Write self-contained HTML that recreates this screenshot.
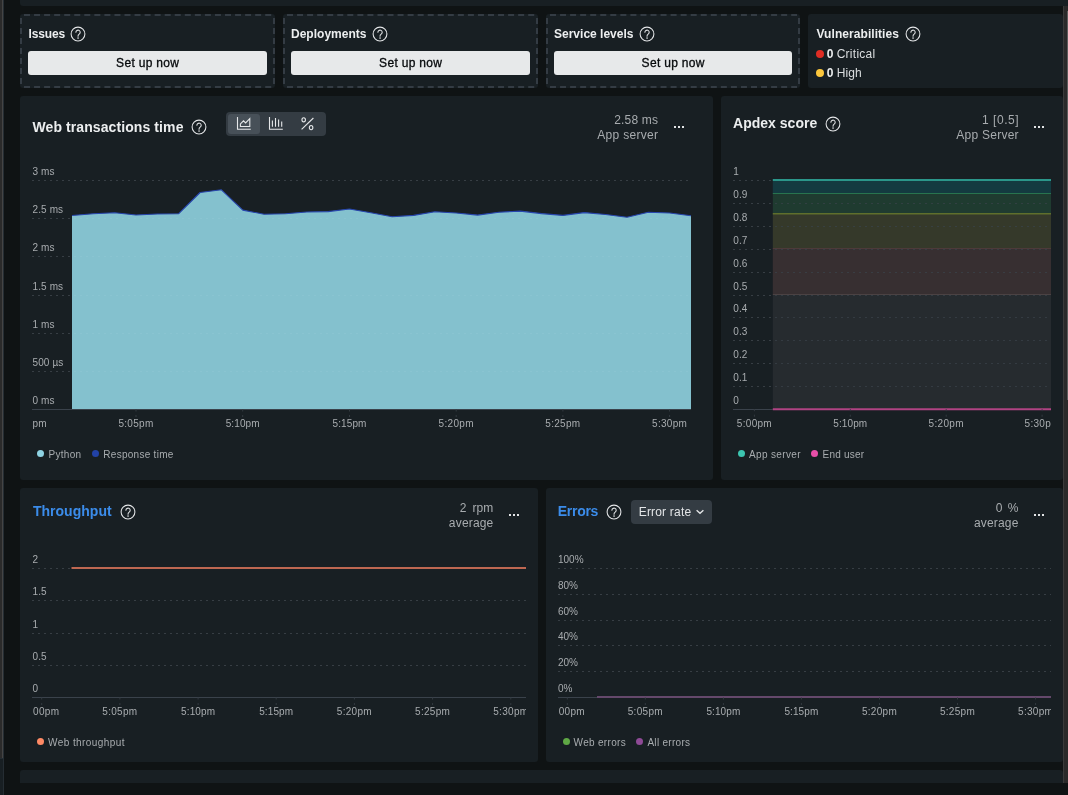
<!DOCTYPE html>
<html><head><meta charset="utf-8"><title>Summary</title>
<style>
html,body{margin:0;padding:0}
body{width:1068px;height:795px;overflow:hidden;position:relative;background:#0f1314;font-family:"Liberation Sans",sans-serif}
.a,.t,.p,.d,.b{position:absolute}
.t{white-space:nowrap}
.p{background:#181f23;border-radius:3px}
.d{width:2px;height:2px;background:#e2e4e6}
.b{background:#e7e9ea;border-radius:3px;height:24px;width:239px;top:51px}
svg{display:block;overflow:visible}
</style></head><body><div id="root" style="position:absolute;left:0;top:0;width:1068px;height:795px;will-change:transform">

<div class="a" style="left:20px;top:0;width:1048px;height:5.7px;background:#181f23;border-bottom-left-radius:3px"></div>
<div class="a" style="left:0;top:0;width:2px;height:758px;background:#2b2b2b"></div>
<div class="a" style="left:2px;top:0;width:1px;height:758px;background:#454545"></div>
<div class="a" style="left:0;top:758px;width:3px;height:37px;background:#181f23;border-top:1px solid #252d33;box-sizing:border-box"></div>
<div class="a" style="left:3px;top:0;width:1px;height:795px;background:#252d33"></div>
<div class="a" style="left:1063px;top:6px;width:1px;height:777px;background:#3a3a3a"></div>
<div class="a" style="left:1064px;top:6px;width:4px;height:777px;background:#2a2a2a"></div>
<div class="a" style="left:1067px;top:10.5px;width:1px;height:389.5px;background:#5c5c5c"></div>
<div class="p" style="left:20px;top:14px;width:255px;height:74px;"></div>
<svg class="a" style="left:20px;top:14px" width="255" height="74" fill="none" stroke="#343c44" stroke-width="2"><path d="M4 1H252M4 73H252" stroke-dasharray="6 4.05"/><path d="M1 4V70M254 4V70" stroke-dasharray="6 4"/></svg>
<div class="t" style="top:28px;font-size:12px;line-height:12px;color:#eceeef;font-weight:bold;letter-spacing:-0.143px;left:28.50px;">Issues</div>
<svg class="a" style="left:70.30px;top:25.60px" width="16" height="16" viewBox="0 0 16 16" fill="none" stroke="#e4e6e8" stroke-width="1.05"><circle cx="8" cy="8" r="6.9"/><path d="M5.9 6.3a2.15 2.15 0 1 1 3.3 1.8c-.75.5-1.15.95-1.15 1.8v.35" stroke-linecap="round"/><circle cx="8.05" cy="12.1" r=".8" fill="#e4e6e8" stroke="none"/></svg>
<div class="b" style="left:28px;width:239px"></div>
<div class="t" style="top:57px;font-size:12px;line-height:12px;color:#06090b;letter-spacing:0.3px;left:47.65px;width:200px;text-align:center;-webkit-text-stroke:.3px #06090b;">Set up now</div>
<div class="p" style="left:283px;top:14px;width:255px;height:74px;"></div>
<svg class="a" style="left:283px;top:14px" width="255" height="74" fill="none" stroke="#343c44" stroke-width="2"><path d="M4 1H252M4 73H252" stroke-dasharray="6 4.05"/><path d="M1 4V70M254 4V70" stroke-dasharray="6 4"/></svg>
<div class="t" style="top:28px;font-size:12px;line-height:12px;color:#eceeef;font-weight:bold;letter-spacing:0.013px;left:291.00px;">Deployments</div>
<svg class="a" style="left:371.80px;top:25.60px" width="16" height="16" viewBox="0 0 16 16" fill="none" stroke="#e4e6e8" stroke-width="1.05"><circle cx="8" cy="8" r="6.9"/><path d="M5.9 6.3a2.15 2.15 0 1 1 3.3 1.8c-.75.5-1.15.95-1.15 1.8v.35" stroke-linecap="round"/><circle cx="8.05" cy="12.1" r=".8" fill="#e4e6e8" stroke="none"/></svg>
<div class="b" style="left:291px;width:239px"></div>
<div class="t" style="top:57px;font-size:12px;line-height:12px;color:#06090b;letter-spacing:0.3px;left:310.65px;width:200px;text-align:center;-webkit-text-stroke:.3px #06090b;">Set up now</div>
<div class="p" style="left:546px;top:14px;width:254px;height:74px;"></div>
<svg class="a" style="left:546px;top:14px" width="254" height="74" fill="none" stroke="#343c44" stroke-width="2"><path d="M4 1H251M4 73H251" stroke-dasharray="6 4.05"/><path d="M1 4V70M253 4V70" stroke-dasharray="6 4"/></svg>
<div class="t" style="top:28px;font-size:12px;line-height:12px;color:#eceeef;font-weight:bold;letter-spacing:0.006px;left:554.00px;">Service levels</div>
<svg class="a" style="left:638.80px;top:25.60px" width="16" height="16" viewBox="0 0 16 16" fill="none" stroke="#e4e6e8" stroke-width="1.05"><circle cx="8" cy="8" r="6.9"/><path d="M5.9 6.3a2.15 2.15 0 1 1 3.3 1.8c-.75.5-1.15.95-1.15 1.8v.35" stroke-linecap="round"/><circle cx="8.05" cy="12.1" r=".8" fill="#e4e6e8" stroke="none"/></svg>
<div class="b" style="left:554px;width:238px"></div>
<div class="t" style="top:57px;font-size:12px;line-height:12px;color:#06090b;letter-spacing:0.3px;left:573.15px;width:200px;text-align:center;-webkit-text-stroke:.3px #06090b;">Set up now</div>
<div class="p" style="left:808px;top:14px;width:255px;height:74px;"></div>
<div class="t" style="top:28px;font-size:12px;line-height:12px;color:#eceeef;font-weight:bold;letter-spacing:0.06px;left:816.50px;">Vulnerabilities</div>
<svg class="a" style="left:905.00px;top:25.60px" width="16" height="16" viewBox="0 0 16 16" fill="none" stroke="#e4e6e8" stroke-width="1.05"><circle cx="8" cy="8" r="6.9"/><path d="M5.9 6.3a2.15 2.15 0 1 1 3.3 1.8c-.75.5-1.15.95-1.15 1.8v.35" stroke-linecap="round"/><circle cx="8.05" cy="12.1" r=".8" fill="#e4e6e8" stroke="none"/></svg>
<i class="a" style="left:816px;top:49.8px;width:8px;height:8px;border-radius:50%;background:#df2d24"></i>
<i class="a" style="left:816px;top:69px;width:8px;height:8px;border-radius:50%;background:#fcc73c"></i>
<div class="t" style="top:48px;font-size:12px;line-height:12px;color:#eceeef;font-weight:bold;left:826.70px;">0</div>
<div class="t" style="top:48px;font-size:12px;line-height:12px;color:#dcdfe1;letter-spacing:0.26px;left:836.70px;">Critical</div>
<div class="t" style="top:67px;font-size:12px;line-height:12px;color:#eceeef;font-weight:bold;left:826.70px;">0</div>
<div class="t" style="top:67px;font-size:12px;line-height:12px;color:#dcdfe1;letter-spacing:0.12px;left:836.70px;">High</div>
<div class="p" style="left:20px;top:96px;width:693px;height:384px;"></div>
<div class="p" style="left:721px;top:96px;width:342px;height:384px;"></div>
<div class="t" style="top:120px;font-size:14px;line-height:14px;color:#eceeef;font-weight:bold;letter-spacing:0.09px;left:32.50px;">Web transactions time</div>
<svg class="a" style="left:191.40px;top:119.40px" width="16" height="16" viewBox="0 0 16 16" fill="none" stroke="#e4e6e8" stroke-width="1.05"><circle cx="8" cy="8" r="6.9"/><path d="M5.9 6.3a2.15 2.15 0 1 1 3.3 1.8c-.75.5-1.15.95-1.15 1.8v.35" stroke-linecap="round"/><circle cx="8.05" cy="12.1" r=".8" fill="#e4e6e8" stroke="none"/></svg>
<div class="a" style="left:226px;top:112px;width:100px;height:24px;border-radius:4px;background:#343c43"></div>
<div class="a" style="left:228px;top:114px;width:32px;height:20px;border-radius:3px;background:#475058"></div>
<svg class="a" style="left:226px;top:112px" width="100" height="24" viewBox="226 112 100 24" fill="none" stroke="#e6e8ea" stroke-width="1.1">
<path d="M237.5 117v12.3h13.3"/><path d="M240.4 126.5v-2.6l3.1-3.1 2.1 2.1 4.2-4.2v7.8z" stroke-linejoin="miter"/>
<path d="M269.5 117v12.3h13.3"/><path d="M272.4 120.5v6.2M275.5 118v8.7M278.6 119.5v7.2M281.7 121.5v5.2"/>
<path d="M301.6 129.3L313.4 118"/><ellipse cx="303.7" cy="119.8" rx="1.75" ry="2.1"/><ellipse cx="311.1" cy="127.6" rx="1.75" ry="2.1"/>
</svg>
<div class="t" style="top:114px;font-size:12px;line-height:12px;color:#a8acaf;letter-spacing:0.19px;right:409.81px;">2.58 ms</div>
<div class="t" style="top:129px;font-size:12px;line-height:12px;color:#a8acaf;letter-spacing:0.3px;right:409.70px;">App server</div>
<i class="d" style="left:674px;top:126px"></i><i class="d" style="left:678px;top:126px"></i><i class="d" style="left:682px;top:126px"></i>
<svg class="a" style="left:0;top:0" width="1068" height="795" viewBox="0 0 1068 795"><path d="M32 180.5H689" stroke="#373e44" stroke-width="1" stroke-dasharray="2 4"/><path d="M32 218.5H689" stroke="#373e44" stroke-width="1" stroke-dasharray="2 4"/><path d="M32 256.5H689" stroke="#373e44" stroke-width="1" stroke-dasharray="2 4"/><path d="M32 295.5H689" stroke="#373e44" stroke-width="1" stroke-dasharray="2 4"/><path d="M32 333.5H689" stroke="#373e44" stroke-width="1" stroke-dasharray="2 4"/><path d="M32 371.5H689" stroke="#373e44" stroke-width="1" stroke-dasharray="2 4"/><polygon points="72.0,215.5 93.3,213.7 114.7,212.8 136.0,215.0 157.4,214.0 178.7,213.7 200.1,192.5 221.4,189.8 242.8,210.1 264.1,214.3 285.4,213.7 306.8,212.0 328.1,211.6 349.5,209.0 370.8,212.8 392.2,216.7 413.5,215.4 434.9,211.7 456.2,213.0 477.6,215.1 498.9,212.3 520.2,211.1 541.6,213.6 562.9,215.4 584.3,212.6 605.6,214.5 627.0,217.3 648.3,212.3 669.7,213.0 691.0,215.7 691,409 72,409" fill="#84c1ce"/><path d="M74 218.5H689" stroke="#8fc8d4" stroke-width="1" stroke-dasharray="2 4" opacity=".55"/><path d="M74 256.5H689" stroke="#8fc8d4" stroke-width="1" stroke-dasharray="2 4" opacity=".55"/><path d="M74 295.5H689" stroke="#8fc8d4" stroke-width="1" stroke-dasharray="2 4" opacity=".55"/><path d="M74 333.5H689" stroke="#8fc8d4" stroke-width="1" stroke-dasharray="2 4" opacity=".55"/><path d="M74 371.5H689" stroke="#8fc8d4" stroke-width="1" stroke-dasharray="2 4" opacity=".55"/><polyline points="72.0,215.5 93.3,213.7 114.7,212.8 136.0,215.0 157.4,214.0 178.7,213.7 200.1,192.5 221.4,189.8 242.8,210.1 264.1,214.3 285.4,213.7 306.8,212.0 328.1,211.6 349.5,209.0 370.8,212.8 392.2,216.7 413.5,215.4 434.9,211.7 456.2,213.0 477.6,215.1 498.9,212.3 520.2,211.1 541.6,213.6 562.9,215.4 584.3,212.6 605.6,214.5 627.0,217.3 648.3,212.3 669.7,213.0 691.0,215.7" fill="none" stroke="#2745ad" stroke-width="1.1" stroke-linejoin="round"/><path d="M32 409.5H691" stroke="#3a424b" stroke-width="1"/><path d="M136.0 409.5V417.5" stroke="#333a40" stroke-width="1" stroke-dasharray="2 3.5"/><path d="M242.7 409.5V417.5" stroke="#333a40" stroke-width="1" stroke-dasharray="2 3.5"/><path d="M349.5 409.5V417.5" stroke="#333a40" stroke-width="1" stroke-dasharray="2 3.5"/><path d="M456.2 409.5V417.5" stroke="#333a40" stroke-width="1" stroke-dasharray="2 3.5"/><path d="M562.9 409.5V417.5" stroke="#333a40" stroke-width="1" stroke-dasharray="2 3.5"/><path d="M669.6 409.5V417.5" stroke="#333a40" stroke-width="1" stroke-dasharray="2 3.5"/></svg>
<div class="t" style="top:167px;font-size:10px;line-height:10px;color:#a8acaf;letter-spacing:0.12px;left:32.50px;">3 ms</div>
<div class="t" style="top:205px;font-size:10px;line-height:10px;color:#a8acaf;letter-spacing:0.12px;left:32.50px;">2.5 ms</div>
<div class="t" style="top:243px;font-size:10px;line-height:10px;color:#a8acaf;letter-spacing:0.12px;left:32.50px;">2 ms</div>
<div class="t" style="top:282px;font-size:10px;line-height:10px;color:#a8acaf;letter-spacing:0.12px;left:32.50px;">1.5 ms</div>
<div class="t" style="top:320px;font-size:10px;line-height:10px;color:#a8acaf;letter-spacing:0.12px;left:32.50px;">1 ms</div>
<div class="t" style="top:358px;font-size:10px;line-height:10px;color:#a8acaf;letter-spacing:0.12px;left:32.50px;">500 µs</div>
<div class="t" style="top:396px;font-size:10px;line-height:10px;color:#a8acaf;letter-spacing:0.12px;left:32.50px;">0 ms</div>
<div class="a" style="left:32px;top:415px;width:660px;height:16px;overflow:hidden">
<div class="t" style="left:-52.7px;width:100px;text-align:center;top:4px;font-size:10px;line-height:10px;color:#a8acaf;letter-spacing:.3px">5:00pm</div>
<div class="t" style="left:54.0px;width:100px;text-align:center;top:4px;font-size:10px;line-height:10px;color:#a8acaf;letter-spacing:.3px">5:05pm</div>
<div class="t" style="left:160.7px;width:100px;text-align:center;top:4px;font-size:10px;line-height:10px;color:#a8acaf;letter-spacing:.1px">5:10pm</div>
<div class="t" style="left:267.5px;width:100px;text-align:center;top:4px;font-size:10px;line-height:10px;color:#a8acaf;letter-spacing:.1px">5:15pm</div>
<div class="t" style="left:374.2px;width:100px;text-align:center;top:4px;font-size:10px;line-height:10px;color:#a8acaf;letter-spacing:.3px">5:20pm</div>
<div class="t" style="left:480.9px;width:100px;text-align:center;top:4px;font-size:10px;line-height:10px;color:#a8acaf;letter-spacing:.3px">5:25pm</div>
<div class="t" style="left:587.6px;width:100px;text-align:center;top:4px;font-size:10px;line-height:10px;color:#a8acaf;letter-spacing:.3px">5:30pm</div>
</div>
<i class="a" style="left:36.7px;top:450.1px;width:7px;height:7px;border-radius:50%;background:#8fd3e3"></i>
<div class="t" style="top:450px;font-size:10px;line-height:10px;color:#a8acaf;letter-spacing:0.3px;left:48.50px;">Python</div>
<i class="a" style="left:91.8px;top:450.1px;width:7px;height:7px;border-radius:50%;background:#2242a6"></i>
<div class="t" style="top:450px;font-size:10px;line-height:10px;color:#a8acaf;letter-spacing:0.28px;left:103.30px;">Response time</div>
<div class="t" style="top:116px;font-size:14px;line-height:14px;color:#eceeef;font-weight:bold;letter-spacing:0.02px;left:733.00px;">Apdex score</div>
<svg class="a" style="left:825.40px;top:115.70px" width="16" height="16" viewBox="0 0 16 16" fill="none" stroke="#e4e6e8" stroke-width="1.05"><circle cx="8" cy="8" r="6.9"/><path d="M5.9 6.3a2.15 2.15 0 1 1 3.3 1.8c-.75.5-1.15.95-1.15 1.8v.35" stroke-linecap="round"/><circle cx="8.05" cy="12.1" r=".8" fill="#e4e6e8" stroke="none"/></svg>
<div class="t" style="top:114px;font-size:12px;line-height:12px;color:#a8acaf;letter-spacing:0.55px;right:48.85px;">1 [0.5]</div>
<div class="t" style="top:129px;font-size:12px;line-height:12px;color:#a8acaf;letter-spacing:0.26px;right:49.14px;">App Server</div>
<i class="d" style="left:1034px;top:126px"></i><i class="d" style="left:1038px;top:126px"></i><i class="d" style="left:1042px;top:126px"></i>
<svg class="a" style="left:0;top:0" width="1068" height="795" viewBox="0 0 1068 795"><rect x="772.8" y="181" width="278.2" height="12" fill="#143a40"/><rect x="772.8" y="193" width="278.2" height="20" fill="#1f3b30"/><rect x="772.8" y="213" width="278.2" height="35" fill="#35392a"/><rect x="772.8" y="248" width="278.2" height="46" fill="#372f31"/><rect x="772.8" y="294" width="278.2" height="115" fill="#262b2f"/><path d="M733 180.5H771" stroke="#373e44" stroke-width="1" stroke-dasharray="2 4"/><path d="M775 180.5H1051" stroke="#3a434b" stroke-width="1" stroke-dasharray="2 4" opacity=".7"/><path d="M733 203.5H771" stroke="#373e44" stroke-width="1" stroke-dasharray="2 4"/><path d="M775 203.5H1051" stroke="#3a434b" stroke-width="1" stroke-dasharray="2 4" opacity=".7"/><path d="M733 226.5H771" stroke="#373e44" stroke-width="1" stroke-dasharray="2 4"/><path d="M775 226.5H1051" stroke="#3a434b" stroke-width="1" stroke-dasharray="2 4" opacity=".7"/><path d="M733 249.5H771" stroke="#373e44" stroke-width="1" stroke-dasharray="2 4"/><path d="M775 249.5H1051" stroke="#3a434b" stroke-width="1" stroke-dasharray="2 4" opacity=".7"/><path d="M733 272.5H771" stroke="#373e44" stroke-width="1" stroke-dasharray="2 4"/><path d="M775 272.5H1051" stroke="#3a434b" stroke-width="1" stroke-dasharray="2 4" opacity=".7"/><path d="M733 295.5H771" stroke="#373e44" stroke-width="1" stroke-dasharray="2 4"/><path d="M775 295.5H1051" stroke="#3a434b" stroke-width="1" stroke-dasharray="2 4" opacity=".7"/><path d="M733 317.5H771" stroke="#373e44" stroke-width="1" stroke-dasharray="2 4"/><path d="M775 317.5H1051" stroke="#3a434b" stroke-width="1" stroke-dasharray="2 4" opacity=".7"/><path d="M733 340.5H771" stroke="#373e44" stroke-width="1" stroke-dasharray="2 4"/><path d="M775 340.5H1051" stroke="#3a434b" stroke-width="1" stroke-dasharray="2 4" opacity=".7"/><path d="M733 363.5H771" stroke="#373e44" stroke-width="1" stroke-dasharray="2 4"/><path d="M775 363.5H1051" stroke="#3a434b" stroke-width="1" stroke-dasharray="2 4" opacity=".7"/><path d="M733 386.5H771" stroke="#373e44" stroke-width="1" stroke-dasharray="2 4"/><path d="M775 386.5H1051" stroke="#3a434b" stroke-width="1" stroke-dasharray="2 4" opacity=".7"/><path d="M772.8 193.5H1051" stroke="#28744f" stroke-width="1"/><path d="M772.8 213.7H1051" stroke="#5f6f2c" stroke-width="1.5"/><path d="M772.8 248.5H1051" stroke="#4d3a3a" stroke-width="1"/><path d="M772.8 294.5H1051" stroke="#4b4243" stroke-width="1"/><path d="M772.8 180H1051" stroke="#2b968a" stroke-width="2"/><path d="M733 409.5H772.8" stroke="#3a424b" stroke-width="1"/><path d="M772.8 409.2H1051" stroke="#b04383" stroke-width="2"/><path d="M754.4 409.2V417.2" stroke="#333a40" stroke-width="1" stroke-dasharray="2 3.5"/><path d="M850.3 409.2V417.2" stroke="#333a40" stroke-width="1" stroke-dasharray="2 3.5"/><path d="M946.2 409.2V417.2" stroke="#333a40" stroke-width="1" stroke-dasharray="2 3.5"/><path d="M1042.1 409.2V417.2" stroke="#333a40" stroke-width="1" stroke-dasharray="2 3.5"/></svg>
<div class="t" style="top:167px;font-size:10px;line-height:10px;color:#a8acaf;letter-spacing:0.1px;left:733.30px;">1</div>
<div class="t" style="top:190px;font-size:10px;line-height:10px;color:#a8acaf;letter-spacing:0.1px;left:733.30px;">0.9</div>
<div class="t" style="top:213px;font-size:10px;line-height:10px;color:#a8acaf;letter-spacing:0.1px;left:733.30px;">0.8</div>
<div class="t" style="top:236px;font-size:10px;line-height:10px;color:#a8acaf;letter-spacing:0.1px;left:733.30px;">0.7</div>
<div class="t" style="top:259px;font-size:10px;line-height:10px;color:#a8acaf;letter-spacing:0.1px;left:733.30px;">0.6</div>
<div class="t" style="top:282px;font-size:10px;line-height:10px;color:#a8acaf;letter-spacing:0.1px;left:733.30px;">0.5</div>
<div class="t" style="top:304px;font-size:10px;line-height:10px;color:#a8acaf;letter-spacing:0.1px;left:733.30px;">0.4</div>
<div class="t" style="top:327px;font-size:10px;line-height:10px;color:#a8acaf;letter-spacing:0.1px;left:733.30px;">0.3</div>
<div class="t" style="top:350px;font-size:10px;line-height:10px;color:#a8acaf;letter-spacing:0.1px;left:733.30px;">0.2</div>
<div class="t" style="top:373px;font-size:10px;line-height:10px;color:#a8acaf;letter-spacing:0.1px;left:733.30px;">0.1</div>
<div class="t" style="top:396px;font-size:10px;line-height:10px;color:#a8acaf;letter-spacing:0.1px;left:733.30px;">0</div>
<div class="a" style="left:733px;top:415px;width:318px;height:16px;overflow:hidden">
<div class="t" style="left:-28.6px;width:100px;text-align:center;top:4px;font-size:10px;line-height:10px;color:#a8acaf;letter-spacing:.3px">5:00pm</div>
<div class="t" style="left:67.3px;width:100px;text-align:center;top:4px;font-size:10px;line-height:10px;color:#a8acaf;letter-spacing:.1px">5:10pm</div>
<div class="t" style="left:163.2px;width:100px;text-align:center;top:4px;font-size:10px;line-height:10px;color:#a8acaf;letter-spacing:.3px">5:20pm</div>
<div class="t" style="left:259.1px;width:100px;text-align:center;top:4px;font-size:10px;line-height:10px;color:#a8acaf;letter-spacing:.3px">5:30pm</div>
</div>
<i class="a" style="left:737.9px;top:450px;width:7px;height:7px;border-radius:50%;background:#3cc5b0"></i>
<div class="t" style="top:450px;font-size:10px;line-height:10px;color:#a8acaf;letter-spacing:0.36px;left:749.00px;">App server</div>
<i class="a" style="left:811.1px;top:450px;width:7px;height:7px;border-radius:50%;background:#e74fa8"></i>
<div class="t" style="top:450px;font-size:10px;line-height:10px;color:#a8acaf;letter-spacing:0.2px;left:822.60px;">End user</div>
<div class="p" style="left:20px;top:488px;width:517.5px;height:273.5px;"></div>
<div class="p" style="left:545.5px;top:488px;width:517.5px;height:273.5px;"></div>
<div class="t" style="top:504px;font-size:14px;line-height:14px;color:#3b8cea;font-weight:bold;letter-spacing:0.03px;left:32.90px;">Throughput</div>
<svg class="a" style="left:119.50px;top:503.70px" width="16" height="16" viewBox="0 0 16 16" fill="none" stroke="#e4e6e8" stroke-width="1.05"><circle cx="8" cy="8" r="6.9"/><path d="M5.9 6.3a2.15 2.15 0 1 1 3.3 1.8c-.75.5-1.15.95-1.15 1.8v.35" stroke-linecap="round"/><circle cx="8.05" cy="12.1" r=".8" fill="#e4e6e8" stroke="none"/></svg>
<div class="t" style="top:502px;font-size:12px;line-height:12px;color:#a8acaf;letter-spacing:0.1px;word-spacing:2.6px;right:574.60px;">2 rpm</div>
<div class="t" style="top:517px;font-size:12px;line-height:12px;color:#a8acaf;letter-spacing:0.18px;right:574.52px;">average</div>
<i class="d" style="left:509px;top:514px"></i><i class="d" style="left:513px;top:514px"></i><i class="d" style="left:517px;top:514px"></i>
<svg class="a" style="left:0;top:0" width="1068" height="795" viewBox="0 0 1068 795"><path d="M32 568.5H526" stroke="#373e44" stroke-width="1" stroke-dasharray="2 4"/><path d="M32 600.5H526" stroke="#373e44" stroke-width="1" stroke-dasharray="2 4"/><path d="M32 633.5H526" stroke="#373e44" stroke-width="1" stroke-dasharray="2 4"/><path d="M32 665.5H526" stroke="#373e44" stroke-width="1" stroke-dasharray="2 4"/><path d="M32 697.5H526" stroke="#3a424b" stroke-width="1"/><path d="M71.5 568H526" stroke="#be6751" stroke-width="2"/><path d="M41.7 697.5V705.5" stroke="#333a40" stroke-width="1" stroke-dasharray="2 3.5"/><path d="M119.9 697.5V705.5" stroke="#333a40" stroke-width="1" stroke-dasharray="2 3.5"/><path d="M198.1 697.5V705.5" stroke="#333a40" stroke-width="1" stroke-dasharray="2 3.5"/><path d="M276.2 697.5V705.5" stroke="#333a40" stroke-width="1" stroke-dasharray="2 3.5"/><path d="M354.4 697.5V705.5" stroke="#333a40" stroke-width="1" stroke-dasharray="2 3.5"/><path d="M432.6 697.5V705.5" stroke="#333a40" stroke-width="1" stroke-dasharray="2 3.5"/><path d="M510.8 697.5V705.5" stroke="#333a40" stroke-width="1" stroke-dasharray="2 3.5"/><path d="M558 568.5H1051" stroke="#373e44" stroke-width="1" stroke-dasharray="2 4"/><path d="M558 594.5H1051" stroke="#373e44" stroke-width="1" stroke-dasharray="2 4"/><path d="M558 620.5H1051" stroke="#373e44" stroke-width="1" stroke-dasharray="2 4"/><path d="M558 645.5H1051" stroke="#373e44" stroke-width="1" stroke-dasharray="2 4"/><path d="M558 671.5H1051" stroke="#373e44" stroke-width="1" stroke-dasharray="2 4"/><path d="M558 697.5H1051" stroke="#3a424b" stroke-width="1"/><path d="M597 697H1051" stroke="#64486b" stroke-width="2"/><path d="M567.3 697.5V705.5" stroke="#333a40" stroke-width="1" stroke-dasharray="2 3.5"/><path d="M645.3 697.5V705.5" stroke="#333a40" stroke-width="1" stroke-dasharray="2 3.5"/><path d="M723.4 697.5V705.5" stroke="#333a40" stroke-width="1" stroke-dasharray="2 3.5"/><path d="M801.4 697.5V705.5" stroke="#333a40" stroke-width="1" stroke-dasharray="2 3.5"/><path d="M879.5 697.5V705.5" stroke="#333a40" stroke-width="1" stroke-dasharray="2 3.5"/><path d="M957.5 697.5V705.5" stroke="#333a40" stroke-width="1" stroke-dasharray="2 3.5"/><path d="M1035.6 697.5V705.5" stroke="#333a40" stroke-width="1" stroke-dasharray="2 3.5"/></svg>
<div class="t" style="top:555px;font-size:10px;line-height:10px;color:#a8acaf;letter-spacing:0.1px;left:32.50px;">2</div>
<div class="t" style="top:587px;font-size:10px;line-height:10px;color:#a8acaf;letter-spacing:0.1px;left:32.50px;">1.5</div>
<div class="t" style="top:620px;font-size:10px;line-height:10px;color:#a8acaf;letter-spacing:0.1px;left:32.50px;">1</div>
<div class="t" style="top:652px;font-size:10px;line-height:10px;color:#a8acaf;letter-spacing:0.1px;left:32.50px;">0.5</div>
<div class="t" style="top:684px;font-size:10px;line-height:10px;color:#a8acaf;letter-spacing:0.1px;left:32.50px;">0</div>
<div class="a" style="left:32px;top:703px;width:494px;height:16px;overflow:hidden">
<div class="t" style="left:-40.3px;width:100px;text-align:center;top:4px;font-size:10px;line-height:10px;color:#a8acaf;letter-spacing:.3px">5:00pm</div>
<div class="t" style="left:37.9px;width:100px;text-align:center;top:4px;font-size:10px;line-height:10px;color:#a8acaf;letter-spacing:.3px">5:05pm</div>
<div class="t" style="left:116.1px;width:100px;text-align:center;top:4px;font-size:10px;line-height:10px;color:#a8acaf;letter-spacing:.1px">5:10pm</div>
<div class="t" style="left:194.2px;width:100px;text-align:center;top:4px;font-size:10px;line-height:10px;color:#a8acaf;letter-spacing:.1px">5:15pm</div>
<div class="t" style="left:272.4px;width:100px;text-align:center;top:4px;font-size:10px;line-height:10px;color:#a8acaf;letter-spacing:.3px">5:20pm</div>
<div class="t" style="left:350.6px;width:100px;text-align:center;top:4px;font-size:10px;line-height:10px;color:#a8acaf;letter-spacing:.3px">5:25pm</div>
<div class="t" style="left:428.8px;width:100px;text-align:center;top:4px;font-size:10px;line-height:10px;color:#a8acaf;letter-spacing:.3px">5:30pm</div>
</div>
<i class="a" style="left:36.9px;top:738.2px;width:7px;height:7px;border-radius:50%;background:#ff8a65"></i>
<div class="t" style="top:738px;font-size:10px;line-height:10px;color:#a8acaf;letter-spacing:0.43px;left:48.00px;">Web throughput</div>
<div class="t" style="top:504px;font-size:14px;line-height:14px;color:#3b8cea;font-weight:bold;letter-spacing:-0.3px;left:557.80px;">Errors</div>
<svg class="a" style="left:606.20px;top:503.70px" width="16" height="16" viewBox="0 0 16 16" fill="none" stroke="#e4e6e8" stroke-width="1.05"><circle cx="8" cy="8" r="6.9"/><path d="M5.9 6.3a2.15 2.15 0 1 1 3.3 1.8c-.75.5-1.15.95-1.15 1.8v.35" stroke-linecap="round"/><circle cx="8.05" cy="12.1" r=".8" fill="#e4e6e8" stroke="none"/></svg>
<div class="a" style="left:631px;top:500px;width:81px;height:24px;border-radius:4px;background:#343c43"></div>
<div class="t" style="top:506px;font-size:12px;line-height:12px;color:#e3e5e7;letter-spacing:0.19px;left:638.70px;">Error rate</div>
<svg class="a" style="left:695px;top:507px" width="10" height="9" viewBox="695 507 10 9" fill="none" stroke="#e3e5e7" stroke-width="1.4"><path d="M696.6 510.2l3.4 3 3.4-3"/></svg>
<div class="t" style="top:502px;font-size:12px;line-height:12px;color:#a8acaf;word-spacing:2px;right:49.60px;">0 %</div>
<div class="t" style="top:517px;font-size:12px;line-height:12px;color:#a8acaf;letter-spacing:0.18px;right:49.42px;">average</div>
<i class="d" style="left:1034px;top:514px"></i><i class="d" style="left:1038px;top:514px"></i><i class="d" style="left:1042px;top:514px"></i>
<div class="t" style="top:555px;font-size:10px;line-height:10px;color:#a8acaf;left:558.00px;">100%</div>
<div class="t" style="top:581px;font-size:10px;line-height:10px;color:#a8acaf;left:558.00px;">80%</div>
<div class="t" style="top:607px;font-size:10px;line-height:10px;color:#a8acaf;left:558.00px;">60%</div>
<div class="t" style="top:632px;font-size:10px;line-height:10px;color:#a8acaf;left:558.00px;">40%</div>
<div class="t" style="top:658px;font-size:10px;line-height:10px;color:#a8acaf;left:558.00px;">20%</div>
<div class="t" style="top:684px;font-size:10px;line-height:10px;color:#a8acaf;left:558.00px;">0%</div>
<div class="a" style="left:558px;top:703px;width:493px;height:16px;overflow:hidden">
<div class="t" style="left:-40.7px;width:100px;text-align:center;top:4px;font-size:10px;line-height:10px;color:#a8acaf;letter-spacing:.3px">5:00pm</div>
<div class="t" style="left:37.3px;width:100px;text-align:center;top:4px;font-size:10px;line-height:10px;color:#a8acaf;letter-spacing:.3px">5:05pm</div>
<div class="t" style="left:115.4px;width:100px;text-align:center;top:4px;font-size:10px;line-height:10px;color:#a8acaf;letter-spacing:.1px">5:10pm</div>
<div class="t" style="left:193.4px;width:100px;text-align:center;top:4px;font-size:10px;line-height:10px;color:#a8acaf;letter-spacing:.1px">5:15pm</div>
<div class="t" style="left:271.5px;width:100px;text-align:center;top:4px;font-size:10px;line-height:10px;color:#a8acaf;letter-spacing:.3px">5:20pm</div>
<div class="t" style="left:349.5px;width:100px;text-align:center;top:4px;font-size:10px;line-height:10px;color:#a8acaf;letter-spacing:.3px">5:25pm</div>
<div class="t" style="left:427.6px;width:100px;text-align:center;top:4px;font-size:10px;line-height:10px;color:#a8acaf;letter-spacing:.3px">5:30pm</div>
</div>
<i class="a" style="left:563px;top:738.2px;width:7px;height:7px;border-radius:50%;background:#5fa845"></i>
<div class="t" style="top:738px;font-size:10px;line-height:10px;color:#a8acaf;letter-spacing:0.31px;left:573.60px;">Web errors</div>
<i class="a" style="left:636.1px;top:738.2px;width:7px;height:7px;border-radius:50%;background:#8e4a96"></i>
<div class="t" style="top:738px;font-size:10px;line-height:10px;color:#a8acaf;letter-spacing:0.3px;left:647.40px;">All errors</div>
<div class="a" style="left:20px;top:770px;width:1043px;height:13px;background:#181f23;border-radius:3px 3px 0 0"></div>
</div></body></html>
